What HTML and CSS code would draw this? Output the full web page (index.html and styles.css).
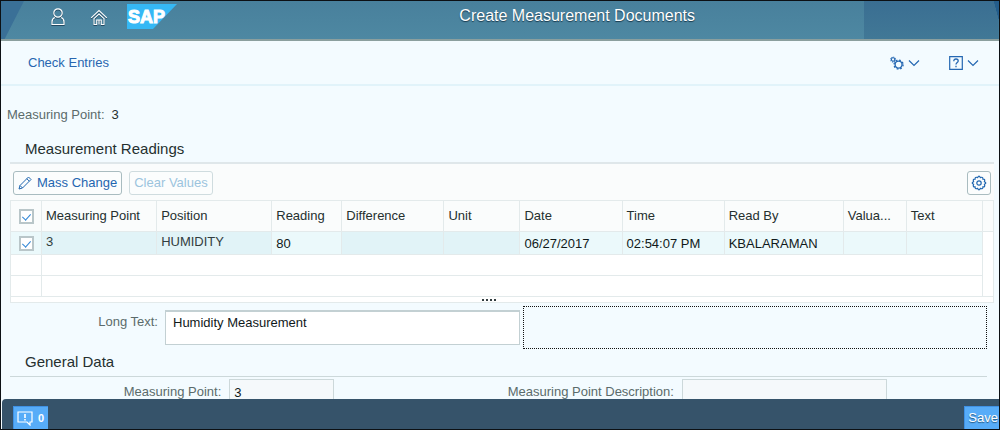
FILE: index.html
```html
<!DOCTYPE html>
<html lang="en">
<head>
<meta charset="utf-8">
<title>Create Measurement Documents</title>
<link rel="stylesheet" href="styles.css">
</head>
<body>
<div class="app">
  <header class="shell">
    <nav class="shell-nav">
      <button class="shell-btn" aria-label="User">
        <svg width="16" height="20" viewBox="0 0 16 20"><circle cx="8" cy="6" r="4.2"/><path d="M4.800 10.500C2.500 11.500 2 13 2 15v2.500h12V15c0-2-.5-3.500-2.800-4.500"/></svg>
      </button>
      <button class="shell-btn" aria-label="Home">
        <svg width="18" height="18" viewBox="0 0 18 18"><path d="M1.200 9.800L9 2.600l7.800 7.200M3.700 10.800L9 6l5.300 4.800M4 10.500v6h2.700V12h4.600v4.500H14v-6M9 12v4.500" stroke-width="1.100"/></svg>
      </button>
      <svg class="logo" width="50" height="25" viewBox="0 0 50 25" role="img" aria-label="SAP"><path d="M0 0h50L26 25H0z"/><text x="1" y="19">SAP</text></svg>
    </nav>
    <h1 class="shell-title">Create Measurement Documents</h1>
  </header>

  <div class="actions">
    <a class="link" href="#">Check Entries</a>
    <div class="menus">
      <button class="menu" aria-label="Settings">
        <svg width="14" height="14" viewBox="0 0 16 16"><circle cx="3.500" cy="4" r="1.900"/><circle cx="3.500" cy="4" r="2.800" stroke-dasharray="1.100 1.100"/><circle cx="9.800" cy="9.800" r="4" stroke-width="1.600"/><circle cx="9.800" cy="9.800" r="5.200" stroke-width="1.500" stroke-dasharray="2.040 2.040"/></svg>
        <svg width="12" height="8" viewBox="0 0 12 8"><path d="M1 1.500l5 5 5-5"/></svg>
      </button>
      <button class="menu" aria-label="Help">
        <svg width="14" height="14" viewBox="0 0 14 14"><path d="M.7.7h12.600v12.600H.7z"/><path d="M4.800 5.200C4.800 3.700 5.700 3 7 3s2.200.8 2.200 2C9.200 6.500 7 6.600 7 8.500M7 9.800v1.400" stroke-width="1.300"/></svg>
        <svg width="12" height="8" viewBox="0 0 12 8"><path d="M1 1.500l5 5 5-5"/></svg>
      </button>
    </div>
  </div>

  <main class="content">
    <dl class="object"><dt class="label">Measuring Point:</dt><dd class="object-value">3</dd></dl>

    <section class="readings">
      <h2 class="section-title">Measurement Readings</h2>
      <div class="table-tools">
        <button class="btn">
          <svg width="14" height="14" viewBox="0 0 14 14"><path d="M1 13l1-3.500L10.500 1l2.500 2.500L4.500 12zM2 9.500L4.500 12M8.800 2.700l2.500 2.500" stroke-width="1"/></svg>Mass Change
        </button>
        <button class="btn" disabled>Clear Values</button>
        <button class="btn btn-icon" aria-label="Table settings">
          <svg width="16" height="16" viewBox="0 0 16 16"><path d="M6.700 2.600Q8-.2 9.300 2.600Q12.100 1.500 11.900 4.100Q14.500 3.900 13.400 6.700Q16.200 8 13.400 9.300Q14.500 12.100 11.900 11.900Q12.100 14.500 9.300 13.400Q8 16.200 6.700 13.400Q3.900 14.500 4.100 11.900Q1.500 12.100 2.600 9.300Q-.2 8 2.600 6.700Q1.500 3.900 4.100 4.100Q3.900 1.500 6.700 2.600z"/><circle cx="8" cy="8" r="2.200"/></svg>
        </button>
      </div>
      <table class="grid">
        <colgroup><col class="c-check"><col class="c-point"><col class="c-point"><col class="c-reading"><col class="c-wide"><col class="c-unit"><col class="c-wide"><col class="c-wide"><col class="c-by"><col class="c-code"><col class="c-unit"><col class="c-scroll"></colgroup>
        <thead>
          <tr><th class="pick"><input class="check" type="checkbox" aria-label="Select all" checked></th><th>Measuring Point</th><th>Position</th><th>Reading</th><th>Difference</th><th>Unit</th><th>Date</th><th>Time</th><th>Read By</th><th>Valua...</th><th>Text</th><th class="gutter"></th></tr>
        </thead>
        <tbody>
          <tr class="selected"><td class="pick edit"><input class="check" type="checkbox" aria-label="Select row 1" checked></td><td class="fixed">3</td><td class="fixed">HUMIDITY</td><td class="edit">80</td><td></td><td></td><td class="edit">06/27/2017</td><td class="edit">02:54:07 PM</td><td class="edit">KBALARAMAN</td><td class="edit"></td><td class="edit"></td><td class="gutter" rowspan="3"></td></tr>
          <tr class="empty"><td class="pick"></td><td colspan="10"></td></tr>
          <tr class="empty"><td class="pick"></td><td colspan="10"></td></tr>
        </tbody>
      </table>
      <div class="grip"><i class="dot"></i><i class="dot"></i><i class="dot"></i><i class="dot"></i></div>
    </section>

    <div class="long-text">
      <label class="label" for="long">Long Text:</label>
      <textarea class="long-input" id="long">Humidity Measurement</textarea>
      <div class="drop-area"></div>
    </div>

    <section class="general">
      <h2 class="section-title general-title">General Data</h2>
      <div class="fields">
        <div class="field"><label class="label" for="point">Measuring Point:</label><input class="value value-short" id="point" value="3" readonly></div>
        <div class="field"><label class="label" for="desc">Measuring Point Description:</label><input class="value" id="desc" readonly></div>
      </div>
    </section>
  </main>

  <footer class="footer">
    <button class="footer-btn messages" aria-label="Messages 0">
      <svg width="16" height="15" viewBox="0 0 16 15"><path d="M1 1h14v10h-2v3l-3-3H1z"/><path d="M8 3v4M8 8v1.500" stroke-width="1.600"/></svg>0
    </button>
    <button class="footer-btn">Save</button>
  </footer>
</div>
</body>
</html>
```
FILE: styles.css
```css
* { box-sizing: border-box; }
body { margin: 0; font: 13px/16px "Liberation Sans", Arial, sans-serif; color: #25302f; }
button, input, textarea { font: inherit; }
h1, h2, dl, dd { margin: 0; font-weight: normal; }
svg { fill: none; stroke: currentColor; stroke-width: 1.2; flex: none; }

.app { display: flex; flex-direction: column; height: 100vh; border: 1px solid #0c1014; background: #f3fbff; overflow: hidden; }

.shell {
  display: flex; flex: none; align-items: flex-start; height: 40px;
  border-bottom: 2px solid #8b9f9e; color: #fff;
  background:
    linear-gradient(75deg, transparent 70%, #245d8b 72%) right / 8px 100% no-repeat,
    linear-gradient(#3a6e92, #417896) right / 13.500% 100% no-repeat,
    linear-gradient(117deg, #3a7097 20px, transparent 21px),
    linear-gradient(#48809c, #4e88a2);
}
.shell-nav { display: flex; align-items: center; gap: 24px; padding: 3px 0 0 49px; }
.shell-btn { display: flex; padding: 0; border: 0; background: none; color: #fff; filter: drop-shadow(0 1px 0 #244a62); }
.logo { margin-left: -5px; }
.logo path { fill: #35b8f5; stroke: none; }
.logo text { fill: #fff; stroke: #fff; stroke-width: 1; font: bold 18px "Liberation Sans", Arial, sans-serif; }
.shell-title { flex: 1; padding: 4px 304px 0 0; text-align: right; font-size: 16px; line-height: 22px; text-shadow: 0 1px 1px #17384b; }

.actions { display: flex; flex: none; align-items: center; justify-content: space-between; height: 45px; padding: 0 20px 0 27px; border-bottom: 2px solid #e1f3fa; }
.link { color: #2866b0; text-decoration: none; }
.menus { display: flex; gap: 29px; }
.menu { display: flex; align-items: center; gap: 4px; padding: 0; border: 0; background: none; color: #2467b2; }

.content { flex: 1; min-height: 0; overflow: hidden; padding: 21px 5px 0 9px; }
.label { color: #5b6b6b; white-space: nowrap; }
.object { display: flex; gap: 7px; margin-left: -3px; }
.section-title { padding-left: 15px; font-size: 15px; line-height: 20px; }
.readings { padding-top: 16px; }
.table-tools { display: flex; align-items: center; gap: 7px; height: 38px; margin-top: 3px; padding: 2px 3px 0; border-top: 2px solid #dfe7ea; background: #fafcfc; }
.btn { display: flex; align-items: center; gap: 5px; height: 24px; padding: 0 4px; border: 1px solid #a9bcc0; border-radius: 3px; background: #fbfdfd; color: #1f66b0; white-space: nowrap; }
.btn:disabled { border-color: #cfdcdf; color: #9cc4dd; }
.btn-icon { margin-left: auto; padding: 0 3px; }

.grid { width: 100%; table-layout: fixed; border-collapse: collapse; background: #fff; }
.c-check { width: 31px; }
.c-point { width: 115px; }
.c-reading { width: 70px; }
.c-wide { width: 102px; }
.c-unit { width: 76px; }
.c-by { width: 119px; }
.c-code { width: 63px; }
.c-scroll { width: 11px; }
.grid th, .grid td { padding: 0 4px; border: 1px solid #e3eaeb; text-align: left; font-weight: normal; white-space: nowrap; overflow: hidden; }
.grid th { height: 31px; background: #fafcfc; }
.selected td { height: 23px; padding-top: 2px; background: #e1f3f7; color: #10191a; }
.selected .edit { background: #ebf9fb; }
.selected .fixed { padding: 0 4px 3px; color: #333d40; }
.selected .gutter { background: #fff; }
.grid .gutter { padding: 0; }
.empty td { height: 21px; }
.grid .pick { padding: 0; text-align: center; vertical-align: middle; }
.check { appearance: none; display: inline-grid; place-items: center; width: 15px; height: 15px; margin: 0; border: 2px solid #b9c6c9; background: #fff; vertical-align: middle; }
.check:checked::after { content: ""; width: 4px; height: 7px; margin-bottom: 2px; border: solid #3287d6; border-width: 0 1px 1px 0; transform: rotate(42deg); }
.grip { display: flex; justify-content: center; align-items: center; gap: 2px; height: 6px; padding-right: 26px; border: solid #e3eaeb; border-width: 0 1px 1px; background: #fff; }
.dot { width: 2px; height: 2px; background: #333d40; }

.long-text { display: grid; grid-template-columns: 148px 359fr 463fr; margin-top: 3px; padding-right: 7px; }
.long-text .label { padding-top: 8px; text-align: right; }
.long-input { height: 35px; margin: 4px 0 0 7px; padding: 3px 7px; border: 1px solid #c3d0d3; border-top-width: 2px; background: #fff; color: #10191a; resize: none; overflow: hidden; }
.drop-area { height: 43px; margin-left: 3px; border: 1px dotted #111; }

.general { padding: 3px 7px 0 0; }
.general-title { padding-bottom: 4px; border-bottom: 1px solid #ccd8da; }
.fields { display: grid; grid-template-columns: 324fr 552fr 100fr; padding-top: 2px; }
.field { display: flex; justify-content: flex-end; gap: 8px; }
.field .label { padding-top: 5px; }
.value { width: 205px; height: 26px; padding: 0 4px; border: 1px solid #ccd8da; background: #f5f9fb; color: #10191a; }
.value-short { width: 105px; }

.footer { display: flex; flex: none; justify-content: space-between; align-items: flex-end; height: 30px; padding-left: 11px; margin-left: 1px; border-radius: 4px 0 0 0; background: #36536a; }
.footer-btn { display: flex; align-items: center; gap: 5px; height: 23px; padding: 0 1px 0 3px; border: 1px solid #3f91e4; border-width: 1px 0 0 1px; background: #57acf8; color: #fff; text-shadow: 0 1px 1px #24577e; }
.messages { padding: 0 4px 0 3px; font-weight: bold; font-size: 11px; text-shadow: none; }
```
